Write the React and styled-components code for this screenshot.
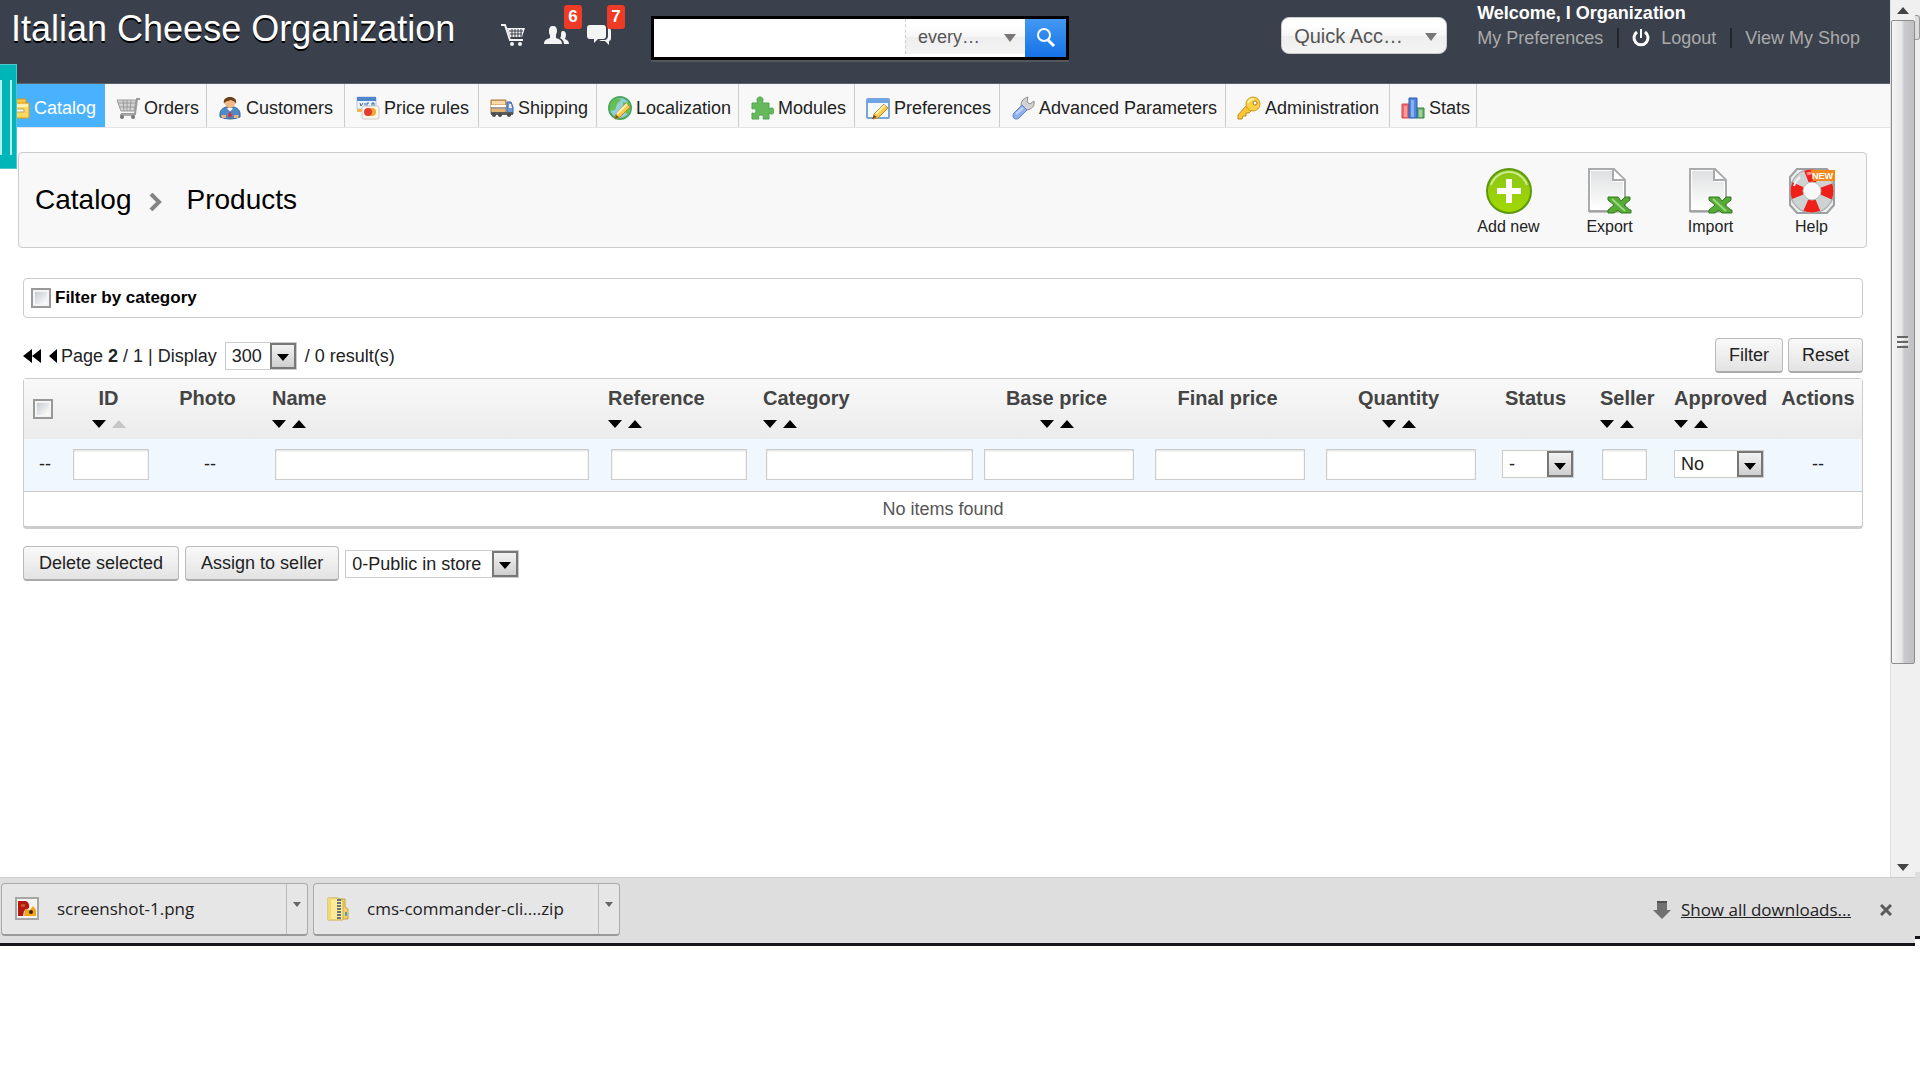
import React, { useState } from "react";
import styled, { createGlobalStyle } from 'styled-components';

const menuItems = [
  { name: 'Orders', icon: 'orders', width: 102 },
  { name: 'Customers', icon: 'customers', width: 138 },
  { name: 'Price rules', icon: 'price', width: 134 },
  { name: 'Shipping', icon: 'shipping', width: 118 },
  { name: 'Localization', icon: 'localization', width: 142 },
  { name: 'Modules', icon: 'modules', width: 116 },
  { name: 'Preferences', icon: 'preferences', width: 145 },
  { name: 'Advanced Parameters', icon: 'advanced', width: 226 },
  { name: 'Administration', icon: 'administration', width: 164 },
  { name: 'Stats', icon: 'stats', width: 87 },
];

// width is left out for the column that takes the rest of the row
const columns = [
  { key: 'check', width: 42 },
  { key: 'id', label: 'ID', width: 90, align: 'center', sort: true, sorted: true, field: 76 },
  { key: 'photo', label: 'Photo', width: 108, align: 'center' },
  { key: 'name', label: 'Name', sort: true, field: '100%' },
  { key: 'reference', label: 'Reference', width: 155, sort: true, field: 136 },
  { key: 'category', label: 'Category', width: 221, sort: true, field: 207 },
  { key: 'base', label: 'Base price', width: 166, align: 'center', sort: true, field: 150 },
  { key: 'final', label: 'Final price', width: 176, align: 'center', field: 150 },
  { key: 'quantity', label: 'Quantity', width: 166, align: 'center', sort: true, field: 150 },
  { key: 'status', label: 'Status', width: 108, align: 'center', options: ['-', 'Yes', 'No'], field: 72 },
  { key: 'seller', label: 'Seller', width: 74, sort: true, field: 45 },
  { key: 'approved', label: 'Approved', width: 108, sort: true, options: ['No', 'Yes'], field: 90 },
  { key: 'actions', label: 'Actions', width: 88, align: 'center' },
];

function App() {
  const [query, setQuery] = useState('');
  const [byCategory, setByCategory] = useState(false);
  const [filters, setFilters] = useState({});

  const setFilter = (key, value) => setFilters({ ...filters, [key]: value });

  return (
    <Screen>
      <GlobalStyle />
      <Browser>
        <Viewport>
          <Page>
            <Header>
              <ShopName href="#shop">Italian Cheese Organization</ShopName>
              <Notifications>
                <NotifButton aria-label="New orders"><CartIcon /></NotifButton>
                <NotifButton aria-label="New customers"><PeopleIcon /><Badge>6</Badge></NotifButton>
                <NotifButton aria-label="New messages"><ChatIcon /><Badge>7</Badge></NotifButton>
              </Notifications>
              <SearchForm onSubmit={(e) => e.preventDefault()}>
                <SearchInput aria-label="Search" value={query} onChange={(e) => setQuery(e.target.value)} />
                <SearchScope>
                  <PlainSelect aria-label="Search in">
                    <option>every…</option>
                  </PlainSelect>
                  <Triangle />
                </SearchScope>
                <SearchButton aria-label="Search"><SearchIcon /></SearchButton>
              </SearchForm>
              <QuickAccess>
                <PlainSelect $large aria-label="Quick Access">
                  <option>Quick Acc…</option>
                </PlainSelect>
                <Triangle />
              </QuickAccess>
              <Account>
                <Welcome>Welcome, I Organization</Welcome>
                <AccountLinks>
                  <AccountLink href="#preferences">My Preferences</AccountLink>
                  <LinkDivider />
                  <AccountLink href="#logout"><PowerIcon />Logout</AccountLink>
                  <LinkDivider />
                  <AccountLink href="#view">View My Shop</AccountLink>
                </AccountLinks>
              </Account>
            </Header>

            <Menu>
              <MenuItem href="#catalog" $active $width={105}><MenuIcon name="catalog" />Catalog</MenuItem>
              {menuItems.map((item) => (
                <MenuItem key={item.name} href={'#' + item.icon} $width={item.width}>
                  <MenuIcon name={item.icon} />{item.name}
                </MenuItem>
              ))}
            </Menu>
            <SideHandle aria-label="Open panel" />

            <Toolbar>
              <Breadcrumb>
                Catalog
                <svg width="13" height="18" viewBox="0 0 13 18"><path d="M2 1l8 8-8 8" fill="none" stroke="#848484" strokeWidth="4" /></svg>
                Products
              </Breadcrumb>
              <Tools>
                <Tool><AddIcon />Add new</Tool>
                <Tool><SheetIcon id="export" />Export</Tool>
                <Tool><SheetIcon id="import" />Import</Tool>
                <Tool><HelpIcon />Help</Tool>
              </Tools>
            </Toolbar>

            <Content>
              <CategoryFilter>
                <Checkbox type="checkbox" id="by-category" checked={byCategory} onChange={(e) => setByCategory(e.target.checked)} />
                <label htmlFor="by-category">Filter by category</label>
              </CategoryFilter>

              <ListBar>
                <Pager>
                  <PageButton aria-label="First page">
                    <svg width="18" height="14" viewBox="0 0 18 14"><path d="M9 0v14L0 7zM18 0v14L9 7z" /></svg>
                  </PageButton>
                  <PageButton aria-label="Previous page">
                    <svg width="8" height="14" viewBox="0 0 8 14"><path d="M8 0v14L0 7z" /></svg>
                  </PageButton>
                  <span>Page <b>2</b> / 1 | Display</span>
                  <DropDown label="Display" width={72} options={['300', '100', '50', '20']} />
                  <span>/ 0 result(s)</span>
                </Pager>
                <Actions>
                  <Button>Filter</Button>
                  <Button>Reset</Button>
                </Actions>
              </ListBar>

              <Table>
                <colgroup>
                  {columns.map((col) => <Col key={col.key} $width={col.width} />)}
                </colgroup>
                <thead>
                  <tr>
                    {columns.map((col) => (
                      <HeadCell key={col.key} $align={col.align}>
                        {col.key === 'check' ? <Checkbox type="checkbox" aria-label="Select all" /> : (
                          <HeadInner>
                            <div>{col.label}</div>
                            <SortRow $align={col.align}>
                              {col.sort && <SortArrows sorted={col.sorted} />}
                            </SortRow>
                          </HeadInner>
                        )}
                      </HeadCell>
                    ))}
                  </tr>
                </thead>
                <tbody>
                  <FilterRow>
                    {columns.map((col) => (
                      <FilterCell key={col.key} $align={col.align}>
                        {!col.field && '--'}
                        {col.field && col.options && (
                          <DropDown label={col.label} width={col.field} options={col.options} />
                        )}
                        {col.field && !col.options && (
                          <FilterInput
                            $width={col.field}
                            aria-label={col.label}
                            value={filters[col.key] || ''}
                            onChange={(e) => setFilter(col.key, e.target.value)}
                          />
                        )}
                      </FilterCell>
                    ))}
                  </FilterRow>
                  <tr>
                    <EmptyCell colSpan={columns.length}>No items found</EmptyCell>
                  </tr>
                </tbody>
              </Table>

              <BulkBar>
                <Button $wide>Delete selected</Button>
                <Button $wide>Assign to seller</Button>
                <DropDown label="Seller" width={174} options={['0-Public in store']} />
              </BulkBar>
            </Content>
          </Page>

          <Scrollbar>
            <ScrollEnd><svg width="12" height="7" viewBox="0 0 12 7"><path d="M0 7l6-7 6 7z" fill="#444" /></svg></ScrollEnd>
            <ScrollTrack>
              <ScrollThumb>
                <svg width="12" height="14" viewBox="0 0 12 14"><path d="M0 2h11M0 7h11M0 12h11" stroke="#666" strokeWidth="2" /><path d="M0 4h12M0 9h12" stroke="#fff" /></svg>
              </ScrollThumb>
            </ScrollTrack>
            <ScrollEnd><svg width="12" height="7" viewBox="0 0 12 7"><path d="M0 0l6 7 6-7z" fill="#444" /></svg></ScrollEnd>
          </Scrollbar>
        </Viewport>

        <DownloadBar>
          <Download>
            <DownloadFile><PngIcon />screenshot-1.png</DownloadFile>
            <DownloadMenu aria-label="screenshot-1.png menu"><Caret /></DownloadMenu>
          </Download>
          <Download>
            <DownloadFile><ZipIcon />cms-commander-cli....zip</DownloadFile>
            <DownloadMenu aria-label="cms-commander-cli....zip menu"><Caret /></DownloadMenu>
          </Download>
          <ShowAll href="#downloads">
            <svg width="18" height="18" viewBox="0 0 18 18"><path d="M4 0h10v9h4l-9 9-9-9h4z" fill="#707070" /><path d="M4 1h10" stroke="#505050" strokeWidth="2" /></svg>
            <span>Show all downloads...</span>
          </ShowAll>
          <CloseButton aria-label="Close">
            <svg width="12" height="12" viewBox="0 0 12 12"><path d="M1 1l10 10M11 1L1 11" stroke="#5a5a5a" strokeWidth="3" /></svg>
          </CloseButton>
        </DownloadBar>
      </Browser>
      <Edge><EdgeThumb /><EdgeFoot /></Edge>
    </Screen>
  );
}

export default App;

function DropDown({ label, width, options }) {
  return (
    <SelectBox $width={width}>
      <Select aria-label={label}>
        {options.map((o) => <option key={o}>{o}</option>)}
      </Select>
      <SelectArrow>
        <svg width="12" height="7" viewBox="0 0 12 7"><path d="M0 0h12L6 7z" /></svg>
      </SelectArrow>
    </SelectBox>
  );
}

function SortArrows({ sorted }) {
  return (
    <>
      <SortButton aria-label="Sort descending">
        <svg width="14" height="8" viewBox="0 0 14 8"><path d="M0 0h14L7 8z" /></svg>
      </SortButton>
      <SortButton aria-label="Sort ascending">
        <svg width="14" height="8" viewBox="0 0 14 8"><path d="M0 8h14L7 0z" fill={sorted ? '#c6c6c6' : '#000'} /></svg>
      </SortButton>
    </>
  );
}

function Caret() {
  return <svg width="8" height="5" viewBox="0 0 8 5"><path d="M0 0h8L4 5z" fill="#666" /></svg>;
}

function Triangle() {
  return (
    <TriangleMark width="12" height="8" viewBox="0 0 12 8"><path d="M0 0h12L6 8z" fill="#777" /></TriangleMark>
  );
}

function CartIcon() {
  return (
    <svg width="25" height="24" viewBox="0 0 25 24" fill="none">
      <path d="M0 2h4l5 15h13" stroke="#f2f2f2" strokeWidth="2" />
      <path d="M6 5h18l-3 9H9z" fill="#f2f2f2" />
      <path d="M8 8h14M9 11h12M11 6v8M14 6v8M17 6v8M20 6v8" stroke="#3a3f49" />
      <circle cx="11" cy="21" r="2" fill="#f2f2f2" />
      <circle cx="19" cy="21" r="2" fill="#f2f2f2" />
    </svg>
  );
}

function PeopleIcon() {
  return (
    <svg width="25" height="24" viewBox="0 0 25 24" fill="#f4f4f4">
      <path d="M9 3c3 0 4 2 4 5 0 2-1 3-1 4v3c3 1 6 2 6 6H0c0-4 3-5 6-6v-3C5 11 5 10 5 8c0-3 1-5 4-5z" />
      <path d="M19 8c2 0 3 2 3 4s-1 3-1 4c2 1 4 2 4 5h-5c0-3-2-5-4-6 1-1 1-2 1-3 0-2 0-4 2-4z" />
    </svg>
  );
}

function ChatIcon() {
  return (
    <svg width="25" height="24" viewBox="0 0 25 24" fill="#f4f4f4">
      <path d="M3 2h13q3 0 3 3v8q0 3-3 3h-5l-4 4v-4H3q-3 0-3-3V5q0-3 3-3z" />
      <path d="M21 5h1q2 1 2 3v7q0 3-2 3v4l-4-4h-6l2-1h4q3-1 3-4z" />
    </svg>
  );
}

function SearchIcon() {
  return (
    <svg width="20" height="20" viewBox="0 0 20 20" fill="none" stroke="#fff">
      <circle cx="8" cy="7" r="6" strokeWidth="2" />
      <path d="M12 12l6 6" strokeWidth="3" />
    </svg>
  );
}

function PowerIcon() {
  return (
    <svg width="18" height="18" viewBox="0 0 18 18" fill="none" stroke="#fff" strokeWidth="3">
      <path d="M5 3a7 7 0 1 0 8 0" />
      <path d="M9 0v9" strokeWidth="2" />
    </svg>
  );
}

// 24px drawings for the main menu
const menuDrawings = {
  catalog: (
    <>
      <path d="M4 3h16v5H4z" fill="#f5c842" stroke="#cf9520" />
      <rect x="3" y="7" width="20" height="15" rx="1" fill="#ffd85c" stroke="#d99c22" />
      <path d="M4 8h18v3H4z" fill="#fff1b5" />
      <path d="M9 13h9v3H9z" fill="#fff" stroke="#b9a05a" />
    </>
  ),
  orders: (
    <>
      <path d="M24 3h-3l-2 15H5" fill="none" stroke="#9a9a9a" strokeWidth="2" />
      <path d="M1 4h19l-2 11H5z" fill="#d4d4d4" stroke="#9a9a9a" />
      <path d="M2 7h17M3 11h15M7 4l1 11M11 4v11M15 4l-1 11" stroke="#999" />
      <path d="M4 19h15" stroke="#aaa" strokeWidth="2" />
      <circle cx="6" cy="21" r="2" fill="#777" />
      <circle cx="17" cy="21" r="2" fill="#777" />
    </>
  ),
  customers: (
    <>
      <path d="M2 18c0-4 3-6 6-7h8c3 1 6 3 6 7v3q-10 4-20 0z" fill="#4f8bc9" stroke="#2d639c" />
      <path d="M9 12l3 4 3-4z" fill="#fff" />
      <path d="M12 14l2 6-2 2-2-2z" fill="#d8322a" />
      <circle cx="12" cy="7" r="5" fill="#f0b884" />
      <path d="M6 8c-1-5 2-7 6-7s7 2 6 7c-1-3-3-3-5-4-3 1-6 1-7 4z" fill="#6d3d17" />
      <path d="M3 19h5v3H4zM16 19h5l-1 3h-4z" fill="#efb27c" />
    </>
  ),
  price: (
    <>
      <rect x="1" y="1" width="19" height="12" rx="1" fill="#eef3fa" stroke="#b8c7da" />
      <path d="M1 1h19v4H1z" fill="#4d86cb" />
      <path d="M4 7l1 3 2-3M9 7v3M13 7h-2v3M16 10V7h2v3" fill="none" stroke="#3563a5" />
      <path d="M1 13h10v3H1z" fill="#f3b34c" />
      <rect x="6" y="10" width="17" height="13" rx="2" fill="#fff7e8" stroke="#c9c9c9" />
      <circle cx="16" cy="16" r="4" fill="#f4a72c" />
      <circle cx="12" cy="16" r="4" fill="#e33a31" />
    </>
  ),
  shipping: (
    <>
      <path d="M1 4h15v14H1z" fill="#e2b476" stroke="#a8763b" />
      <path d="M2 5h13v3H2z" fill="#f6d9a9" />
      <path d="M1 10h15" stroke="#fff" strokeWidth="2" />
      <path d="M1 12h15" stroke="#6d88b5" />
      <path d="M17 6h4l2 5v7h-6z" fill="#6e97d3" stroke="#3d66a2" />
      <path d="M19 8h2l1 4h-3z" fill="#eaf4ff" />
      <path d="M1 16h22v3H1z" fill="#5b5b5b" />
      <circle cx="4" cy="19" r="2" fill="#4a4a4a" />
      <circle cx="10" cy="19" r="2" fill="#4a4a4a" />
      <circle cx="19" cy="19" r="2" fill="#4a4a4a" />
    </>
  ),
  localization: (
    <>
      <circle cx="12" cy="12" r="11" fill="#8fd0dc" stroke="#4da660" strokeWidth="2" />
      <path d="M4 5c4-4 8-3 9-1l-4 4-2 6-5 1c-1-4 0-7 2-10zM15 6l6 1c2 4 2 8-1 12l-5-5z" fill="#67bf54" />
      <path d="M8 18L18 7l4 4-10 10-5 2z" fill="#fbc94a" stroke="#c58a23" />
      <path d="M9 18l10-10" stroke="#fff1b3" strokeWidth="2" />
      <path d="M7 23l1-4 3 2z" fill="#7a5323" />
    </>
  ),
  modules: (
    <path d="M2 7h6c-2-3-1-6 2-6s4 3 2 6h7v6c3-2 5-1 5 2s-2 4-5 2v6h-6c1-3 0-4-2-4s-3 1-2 4H2v-6c3 1 4 0 4-2s-1-3-4-2z" fill="#65b95a" stroke="#4fa550" />
  ),
  preferences: (
    <>
      <rect x="1" y="3" width="22" height="19" rx="1" fill="#f4f8fd" stroke="#7ba5d8" strokeWidth="2" />
      <path d="M1 3h22v4H1z" fill="#6fa4e2" />
      <path d="M8 18L18 8l4 4-10 10-5 1z" fill="#fbc94a" stroke="#c58a23" />
      <path d="M10 18l9-9" stroke="#fff1b3" strokeWidth="2" />
      <path d="M6 23l2-4 3 2z" fill="#7a4a23" />
    </>
  ),
  advanced: (
    <>
      <path d="M12 13L10 9c0-4 3-7 7-8l-1 5 3 2 4-3c1 5-2 8-7 9z" fill="#d3d3d3" stroke="#8c8c8c" />
      <path d="M11 9l5 5-8 8c-4 3-8-1-5-5z" fill="#8fb0ee" stroke="#5d82cc" />
      <path d="M5 18l7-6" stroke="#c7d9fa" strokeWidth="2" />
    </>
  ),
  administration: (
    <>
      <path d="M9 10L1 19v4h4l1-3h3v-3h3l3-3z" fill="#f8c838" stroke="#c18b1a" />
      <circle cx="16" cy="8" r="7" fill="#fbd044" stroke="#c99a1e" />
      <path d="M11 7c1-3 4-4 6-4" fill="none" stroke="#fff0a8" strokeWidth="2" />
      <circle cx="18" cy="7" r="2" fill="#fff" stroke="#a8791a" />
    </>
  ),
  stats: (
    <>
      <path d="M1 8h7v14H1z" fill="#f0696a" stroke="#d9484b" />
      <path d="M3 10h3v11H3z" fill="#ff9b9b" />
      <path d="M16 12h7v10h-7z" fill="#76b276" stroke="#3b7f42" />
      <path d="M18 14h3v7h-3z" fill="#a0d29e" />
      <path d="M8 2h8v20H8z" fill="#4f86e0" stroke="#2a5db4" />
      <path d="M10 4h3v17h-3z" fill="#86b1f2" />
    </>
  ),
};

function MenuIcon({ name }) {
  return <svg width="24" height="24" viewBox="0 0 24 24" fill="none">{menuDrawings[name]}</svg>;
}

function AddIcon() {
  return (
    <svg width="46" height="46" viewBox="0 0 46 46">
      <defs>
        <linearGradient id="add" x1="0" y1="0" x2="0" y2="1">
          <stop offset="0" stopColor="#8ac51a" />
          <stop offset="1" stopColor="#a3d900" />
        </linearGradient>
      </defs>
      <circle cx="23" cy="24" r="22" fill="#c8c8c8" />
      <circle cx="23" cy="23" r="22" fill="url(#add)" stroke="#5c9a0c" strokeWidth="2" />
      <path d="M5 17a19 19 0 0 1 36 0" fill="none" stroke="#cdeb8a" strokeWidth="2" />
      <path d="M20 11h6v9h9v6h-9v9h-6v-9h-9v-6h9z" fill="#fff" />
    </svg>
  );
}

function SheetIcon({ id }) {
  return (
    <svg width="46" height="46" viewBox="0 0 46 46">
      <defs>
        <linearGradient id={id} x1="0" y1="0" x2="0" y2="1">
          <stop offset="0" stopColor="#dfe0e1" />
          <stop offset="1" stopColor="#fff" />
        </linearGradient>
      </defs>
      <path d="M2 1h25l11 11v31H2z" fill="#fff" stroke="#a9abad" strokeWidth="2" />
      <path d="M4 3h22v11h10v27H4z" fill={`url(#${id})`} />
      <path d="M26 2v10h11" fill="#fff" stroke="#a9abad" strokeWidth="2" />
      <path d="M2 44h36" stroke="#8f9193" />
      <path d="M21 29h10l3 4 4-4h5v3l-6 5 6 5h1v3H34l-3-3-4 3h-6v-3l6-5-6-5z" fill="#57a938" stroke="#2f7d1d" />
      <path d="M25 31l13 12" stroke="#9bd97d" strokeWidth="2" />
    </svg>
  );
}

function HelpIcon() {
  return (
    <svg width="46" height="46" viewBox="0 0 46 46" fill="none">
      <path d="M8 1h30l7 8v28l-7 8H8l-7-8V9z" fill="#eceded" stroke="#9da0a2" strokeWidth="2" />
      <circle cx="23" cy="23" r="15" stroke="#a1a4a6" strokeWidth="15" />
      <circle cx="23" cy="23" r="15" stroke="#cfd2d3" strokeWidth="13" />
      <circle cx="23" cy="23" r="15" stroke="#ee2019" strokeWidth="13" strokeDasharray="12 11.56" strokeDashoffset="6" />
      <path d="M5 18a19 19 0 0 1 6-9" stroke="#f4f4f4" strokeWidth="2" />
      <path d="M18 6q5-2 10 0" stroke="#ff8b85" strokeWidth="3" />
      <circle cx="23" cy="23" r="9" fill="#f8f8f8" stroke="#b9bbbc" />
      <path d="M22 2h24v11H24z" fill="#f28a20" />
      <text x="23" y="11" fontFamily="'Liberation Sans', Arial, sans-serif" fontSize="9" fontWeight="bold" fill="#fff">NEW</text>
    </svg>
  );
}

function PngIcon() {
  return (
    <svg width="24" height="24" viewBox="0 0 24 24">
      <rect x="1" y="1" width="22" height="21" fill="#f4f4ee" stroke="#a6a6a6" strokeWidth="2" />
      <path d="M3 4h8q4 2 3 7l-5 3-1 5H3z" fill="#b3170f" />
      <path d="M6 7h4v3H6z" fill="#c8501e" />
      <path d="M10 12l5 1 3-4 3 4v6H9z" fill="#f2a51b" />
      <circle cx="16" cy="15" r="2" fill="#3b2408" />
    </svg>
  );
}

function ZipIcon() {
  return (
    <svg width="22" height="24" viewBox="0 0 22 24">
      <path d="M12 2h6v8l3 2v10h-9z" fill="#f1d16a" stroke="#c9a23a" />
      <path d="M1 1h10l5 3v19H1z" fill="#fbea98" stroke="#d1ac44" />
      <path d="M1 1h3v22H1z" fill="#f5d86d" />
      <path d="M12 2v20" stroke="#6a737d" strokeWidth="4" strokeDasharray="2 1" />
      <path d="M19 15v4" stroke="#49a6c9" strokeWidth="2" />
    </svg>
  );
}

const GlobalStyle = createGlobalStyle`
  * {
    box-sizing: border-box;
  }

  body {
    margin: 0;
    background: #fff;
    color: #222;
    font-family: 'Liberation Sans', Arial, sans-serif;
    font-size: 18px;
    line-height: 20px;
  }

  button, input, select {
    margin: 0;
    font: inherit;
    color: inherit;
  }

  button {
    padding: 0;
    border: none;
    background: none;
    cursor: pointer;
  }

  svg {
    display: block;
    flex: none;
  }

  a {
    color: inherit;
    text-decoration: none;
  }
`;

const Screen = styled.div`
  display: flex;
  height: calc(100vh - 134px);
`;

const Browser = styled.div`
  flex: 1;
  min-width: 0;
  display: flex;
  flex-direction: column;
`;

const Viewport = styled.div`
  flex: 1;
  display: flex;
`;

const Page = styled.div`
  position: relative;
  flex: 1;
  min-width: 0;
`;

//상단 헤더 영역
const Header = styled.header`
  display: flex;
  align-items: flex-start;
  height: 84px;
  padding: 0 30px 0 11px;
  background: #3a414c;
  border-bottom: 1px solid #5c636d;
  color: #fff;
`;

const ShopName = styled.a`
  width: 490px;
  padding-top: 9px;
  font-size: 36px;
  line-height: 40px;
  white-space: nowrap;
  text-shadow: 0 2px 0 #000;
`;

const Notifications = styled.div`
  display: flex;
  gap: 18px;
  padding-top: 23px;
`;

const NotifButton = styled.button`
  position: relative;
`;

const Badge = styled.span`
  position: absolute;
  left: 20px;
  top: -18px;
  width: 18px;
  border-radius: 3px;
  background: #ef3a25;
  color: #fff;
  font-size: 17px;
  font-weight: bold;
  line-height: 24px;
`;

const SearchForm = styled.form`
  display: flex;
  width: 418px;
  height: 44px;
  margin: 16px 0 0 39px;
  border: 3px solid #000;
  background: #fff;
  box-shadow: 0 2px 0 #53585c;
`;

const SearchInput = styled.input`
  flex: 1;
  min-width: 0;
  padding: 0 8px;
  border: none;
  outline: none;
  background: transparent;
  color: #333;
`;

const SearchScope = styled.div`
  position: relative;
  width: 120px;
  height: 35px;
  border-left: 1px dashed #ccc;
  background: linear-gradient(#fff 20%, #f6f6f6 50%, #eee 52%, #f4f4f4);
`;

const PlainSelect = styled.select`
  width: 100%;
  height: 100%;
  padding: 0 12px;
  appearance: none;
  border: none;
  background: transparent;
  color: #555;
  font-size: ${(props) => (props.$large ? '20px' : '18px')};
`;

const TriangleMark = styled.svg`
  position: absolute;
  right: 9px;
  top: 50%;
  margin-top: -3px;
  pointer-events: none;
`;

const SearchButton = styled.button`
  display: flex;
  align-items: center;
  justify-content: center;
  width: 41px;
  background: linear-gradient(#4398f2, #1573e6);
`;

const QuickAccess = styled.div`
  position: relative;
  width: 166px;
  height: 37px;
  margin: 17px 30px 0 auto;
  border: 1px solid #ccc;
  border-radius: 8px;
  background: linear-gradient(#fff 20%, #f6f6f6 50%, #eee 52%, #f4f4f4);
`;

const Account = styled.div`
  display: flex;
  flex-direction: column;
  gap: 5px;
  padding-top: 3px;
`;

const Welcome = styled.div`
  font-weight: bold;
`;

const AccountLinks = styled.nav`
  display: flex;
  align-items: center;
  color: #aaa;
`;

const AccountLink = styled.a`
  display: flex;
  align-items: center;
  gap: 11px;
`;

const LinkDivider = styled.span`
  width: 2px;
  height: 20px;
  margin: 0 13px 0 14px;
  background: #22262d;
`;

//메인 메뉴 영역
const Menu = styled.nav`
  display: flex;
  height: 44px;
  background: #f8f8f8;
  border-bottom: 1px solid #e4e4e4;
`;

const MenuItem = styled.a`
  display: flex;
  align-items: center;
  gap: 4px;
  min-width: ${(props) => props.$width}px;
  padding: 4px 5px 0 ${(props) => (props.$active ? '6px' : '11px')};
  border-right: 1px solid ${(props) => (props.$active ? '#49b2ff' : '#ccc')};
  background: ${(props) => (props.$active ? '#49b2ff' : 'transparent')};
  color: ${(props) => (props.$active ? '#fff' : '#222')};
  white-space: nowrap;
`;

const SideHandle = styled.button`
  position: absolute;
  left: 0;
  top: 64px;
  width: 17px;
  height: 105px;
  border: 1px solid #4ccaca;
  border-left: none;
  background: #00b5b8;

  &::before {
    content: '';
    position: absolute;
    left: 0;
    top: 15px;
    width: 8px;
    height: 75px;
    border: solid #b5ecec;
    border-width: 0 2px;
  }
`;

const Toolbar = styled.section`
  display: flex;
  align-items: center;
  justify-content: space-between;
  height: 96px;
  margin: 24px 23px 0 18px;
  padding: 0 4px 0 16px;
  border: 1px solid #ccc;
  border-radius: 4px;
  background: #f8f8f8;
`;

const Breadcrumb = styled.h1`
  display: flex;
  align-items: center;
  margin: 0;
  font-size: 28px;
  font-weight: normal;
  line-height: 32px;
  color: #000;

  svg {
    margin: 4px 25px 0 17px;
  }
`;

const Tools = styled.div`
  display: flex;
  padding-top: 4px;
`;

const Tool = styled.button`
  display: flex;
  flex-direction: column;
  align-items: center;
  gap: 3px;
  width: 101px;
  font-size: 16px;
`;

const Content = styled.main`
  padding: 30px 27px 0 23px;
`;

const CategoryFilter = styled.div`
  display: flex;
  align-items: center;
  gap: 4px;
  height: 40px;
  padding: 0 7px;
  border: 1px solid #ccc;
  border-radius: 4px;
  color: #000;
  font-size: 17px;
  font-weight: bold;
`;

const Checkbox = styled.input`
  appearance: none;
  display: block;
  width: 20px;
  height: 20px;
  padding: 2px;
  border: 2px solid #999;
  background: linear-gradient(135deg, #c6cad0, #fff) content-box, #f4f4f4;

  &:checked {
    background: #4f6f9f content-box, #f4f4f4;
  }
`;

const ListBar = styled.div`
  display: flex;
  justify-content: space-between;
  align-items: center;
  margin: 20px 0 5px;
`;

const Pager = styled.div`
  display: flex;
  align-items: center;
  gap: 8px;
`;

const PageButton = styled.button`
  & + span {
    margin-left: -4px;
  }
`;

const Actions = styled.div`
  display: flex;
  gap: 5px;
`;

const Button = styled.button`
  height: 35px;
  padding: 0 ${(props) => (props.$wide ? '15px' : '13px')};
  border: 1px solid #bbb;
  border-bottom: 2px solid #aaa;
  border-radius: 4px;
  background: linear-gradient(#f9f9f9, #e3e3e3);
`;

const SelectBox = styled.div`
  position: relative;
  display: inline-block;
  vertical-align: middle;
  width: ${(props) => props.$width}px;
  height: 28px;
`;

const Select = styled.select`
  display: block;
  width: 100%;
  height: 100%;
  padding: 0 26px 0 6px;
  appearance: none;
  border: 1px solid #ccc;
  background: #fff;
`;

const SelectArrow = styled.span`
  position: absolute;
  right: 1px;
  top: 1px;
  bottom: 1px;
  width: 26px;
  display: flex;
  align-items: center;
  justify-content: center;
  padding-top: 4px;
  border: 2px solid #777;
  background: linear-gradient(#f2f2f2, #cfcfcf);
  pointer-events: none;
`;

//상품 목록 테이블
const Table = styled.table`
  width: 100%;
  table-layout: fixed;
  border: 1px solid #ccc;
  border-bottom: 3px solid #ccc;
  border-radius: 4px;
  border-spacing: 0;

  thead tr {
    background: linear-gradient(#f9f9f9, #ebebeb);
  }
`;

const Col = styled.col`
  width: ${(props) => (props.$width ? props.$width + 'px' : 'auto')};
`;

const HeadCell = styled.th`
  height: 60px;
  padding: ${(props) => (props.$align ? '0 5px 0 0' : '0 0 0 8px')};
  text-align: ${(props) => props.$align || 'left'};
  color: #444;
  font-size: 20px;
  line-height: 26px;
  white-space: nowrap;

  &:first-child {
    padding-left: 9px;
  }

  &:last-child {
    padding-right: 0;
  }
`;

const HeadInner = styled.div`
  padding-top: 4px;
`;

const SortRow = styled.div`
  display: flex;
  align-items: center;
  justify-content: ${(props) => props.$align || 'flex-start'};
  gap: 6px;
  height: 26px;
`;

const SortButton = styled.button`
  display: block;
`;

const FilterRow = styled.tr`
  background: #f0f7fd;
`;

const FilterCell = styled.td`
  height: 53px;
  padding: ${(props) => (props.$align ? '0 0 2px' : '0 11px 2px')};
  text-align: ${(props) => props.$align || 'left'};
  border-bottom: 1px solid #ccc;

  &:first-child {
    padding-left: 15px;
  }

  &:nth-last-child(2) {
    padding-left: 8px;
  }

  &:nth-last-child(3) {
    padding-left: 10px;
  }
`;

const FilterInput = styled.input`
  width: ${(props) => (typeof props.$width === 'number' ? props.$width + 'px' : props.$width)};
  height: 31px;
  padding: 0 6px;
  border: 1px solid #ccc;
  background: #fff;
  box-shadow: inset 0 1px 2px #ddd;
  outline: none;
  vertical-align: middle;
`;

const EmptyCell = styled.td`
  height: 34px;
  padding: 0;
  text-align: center;
  color: #555;
`;

const BulkBar = styled.div`
  display: flex;
  align-items: center;
  gap: 6px;
  margin-top: 17px;
`;

//스크롤바
const Scrollbar = styled.div`
  display: flex;
  flex-direction: column;
  width: 25px;
  border-left: 1px solid #e0e0e0;
  background: #f0f0f0;
`;

const ScrollEnd = styled.div`
  display: flex;
  align-items: center;
  justify-content: center;
  height: 20px;
`;

const ScrollTrack = styled.div`
  flex: 1;
`;

const ScrollThumb = styled.div`
  display: flex;
  align-items: center;
  justify-content: center;
  height: 77%;
  border: 1px solid #8e8e8e;
  border-radius: 2px;
  background: linear-gradient(90deg, #f5f5f5, #e6e6e7 45%, #cacacd 55%, #c0c0c4);
`;

//다운로드 바 영역
const DownloadBar = styled.footer`
  display: flex;
  align-items: center;
  gap: 5px;
  height: 69px;
  padding: 0 23px 2px 1px;
  border-top: 1px solid #ccc;
  border-bottom: 3px solid #14161c;
  background: #dedede;
  color: #222;
  font-family: 'Open Sans', 'Noto Sans', sans-serif;
  font-size: 17px;
`;

const Download = styled.div`
  display: flex;
  width: 307px;
  height: 53px;
  border: 1px solid #aaa;
  border-bottom: 2px solid #999;
  border-radius: 4px;
  background: #e6e6e6;
`;

const DownloadFile = styled.button`
  flex: 1;
  display: flex;
  align-items: center;
  gap: 18px;
  padding-left: 13px;
  white-space: nowrap;
`;

const DownloadMenu = styled.button`
  display: flex;
  justify-content: center;
  width: 21px;
  padding-top: 18px;
  border-left: 1px solid #bbb;
`;

const ShowAll = styled.a`
  display: flex;
  align-items: center;
  gap: 10px;
  margin-left: auto;

  span {
    text-decoration: underline;
  }
`;

const CloseButton = styled.button`
  margin-left: 24px;
`;

const Edge = styled.div`
  display: flex;
  flex-direction: column;
  width: 5px;
  padding: 15px 0 7px;
  background: linear-gradient(#f0f0f0, #f0f0f0) no-repeat 0 0 / 100% calc(100% - 7px);
`;

const EdgeThumb = styled.div`
  height: 25px;
  border: 1px solid #999;
  border-left: none;
  border-radius: 0 3px 3px 0;
  background: #ddd;
`;

const EdgeFoot = styled.div`
  height: 67px;
  margin-top: auto;
  background: #dedede;
  border-bottom: 3px solid #14161c;
`;
